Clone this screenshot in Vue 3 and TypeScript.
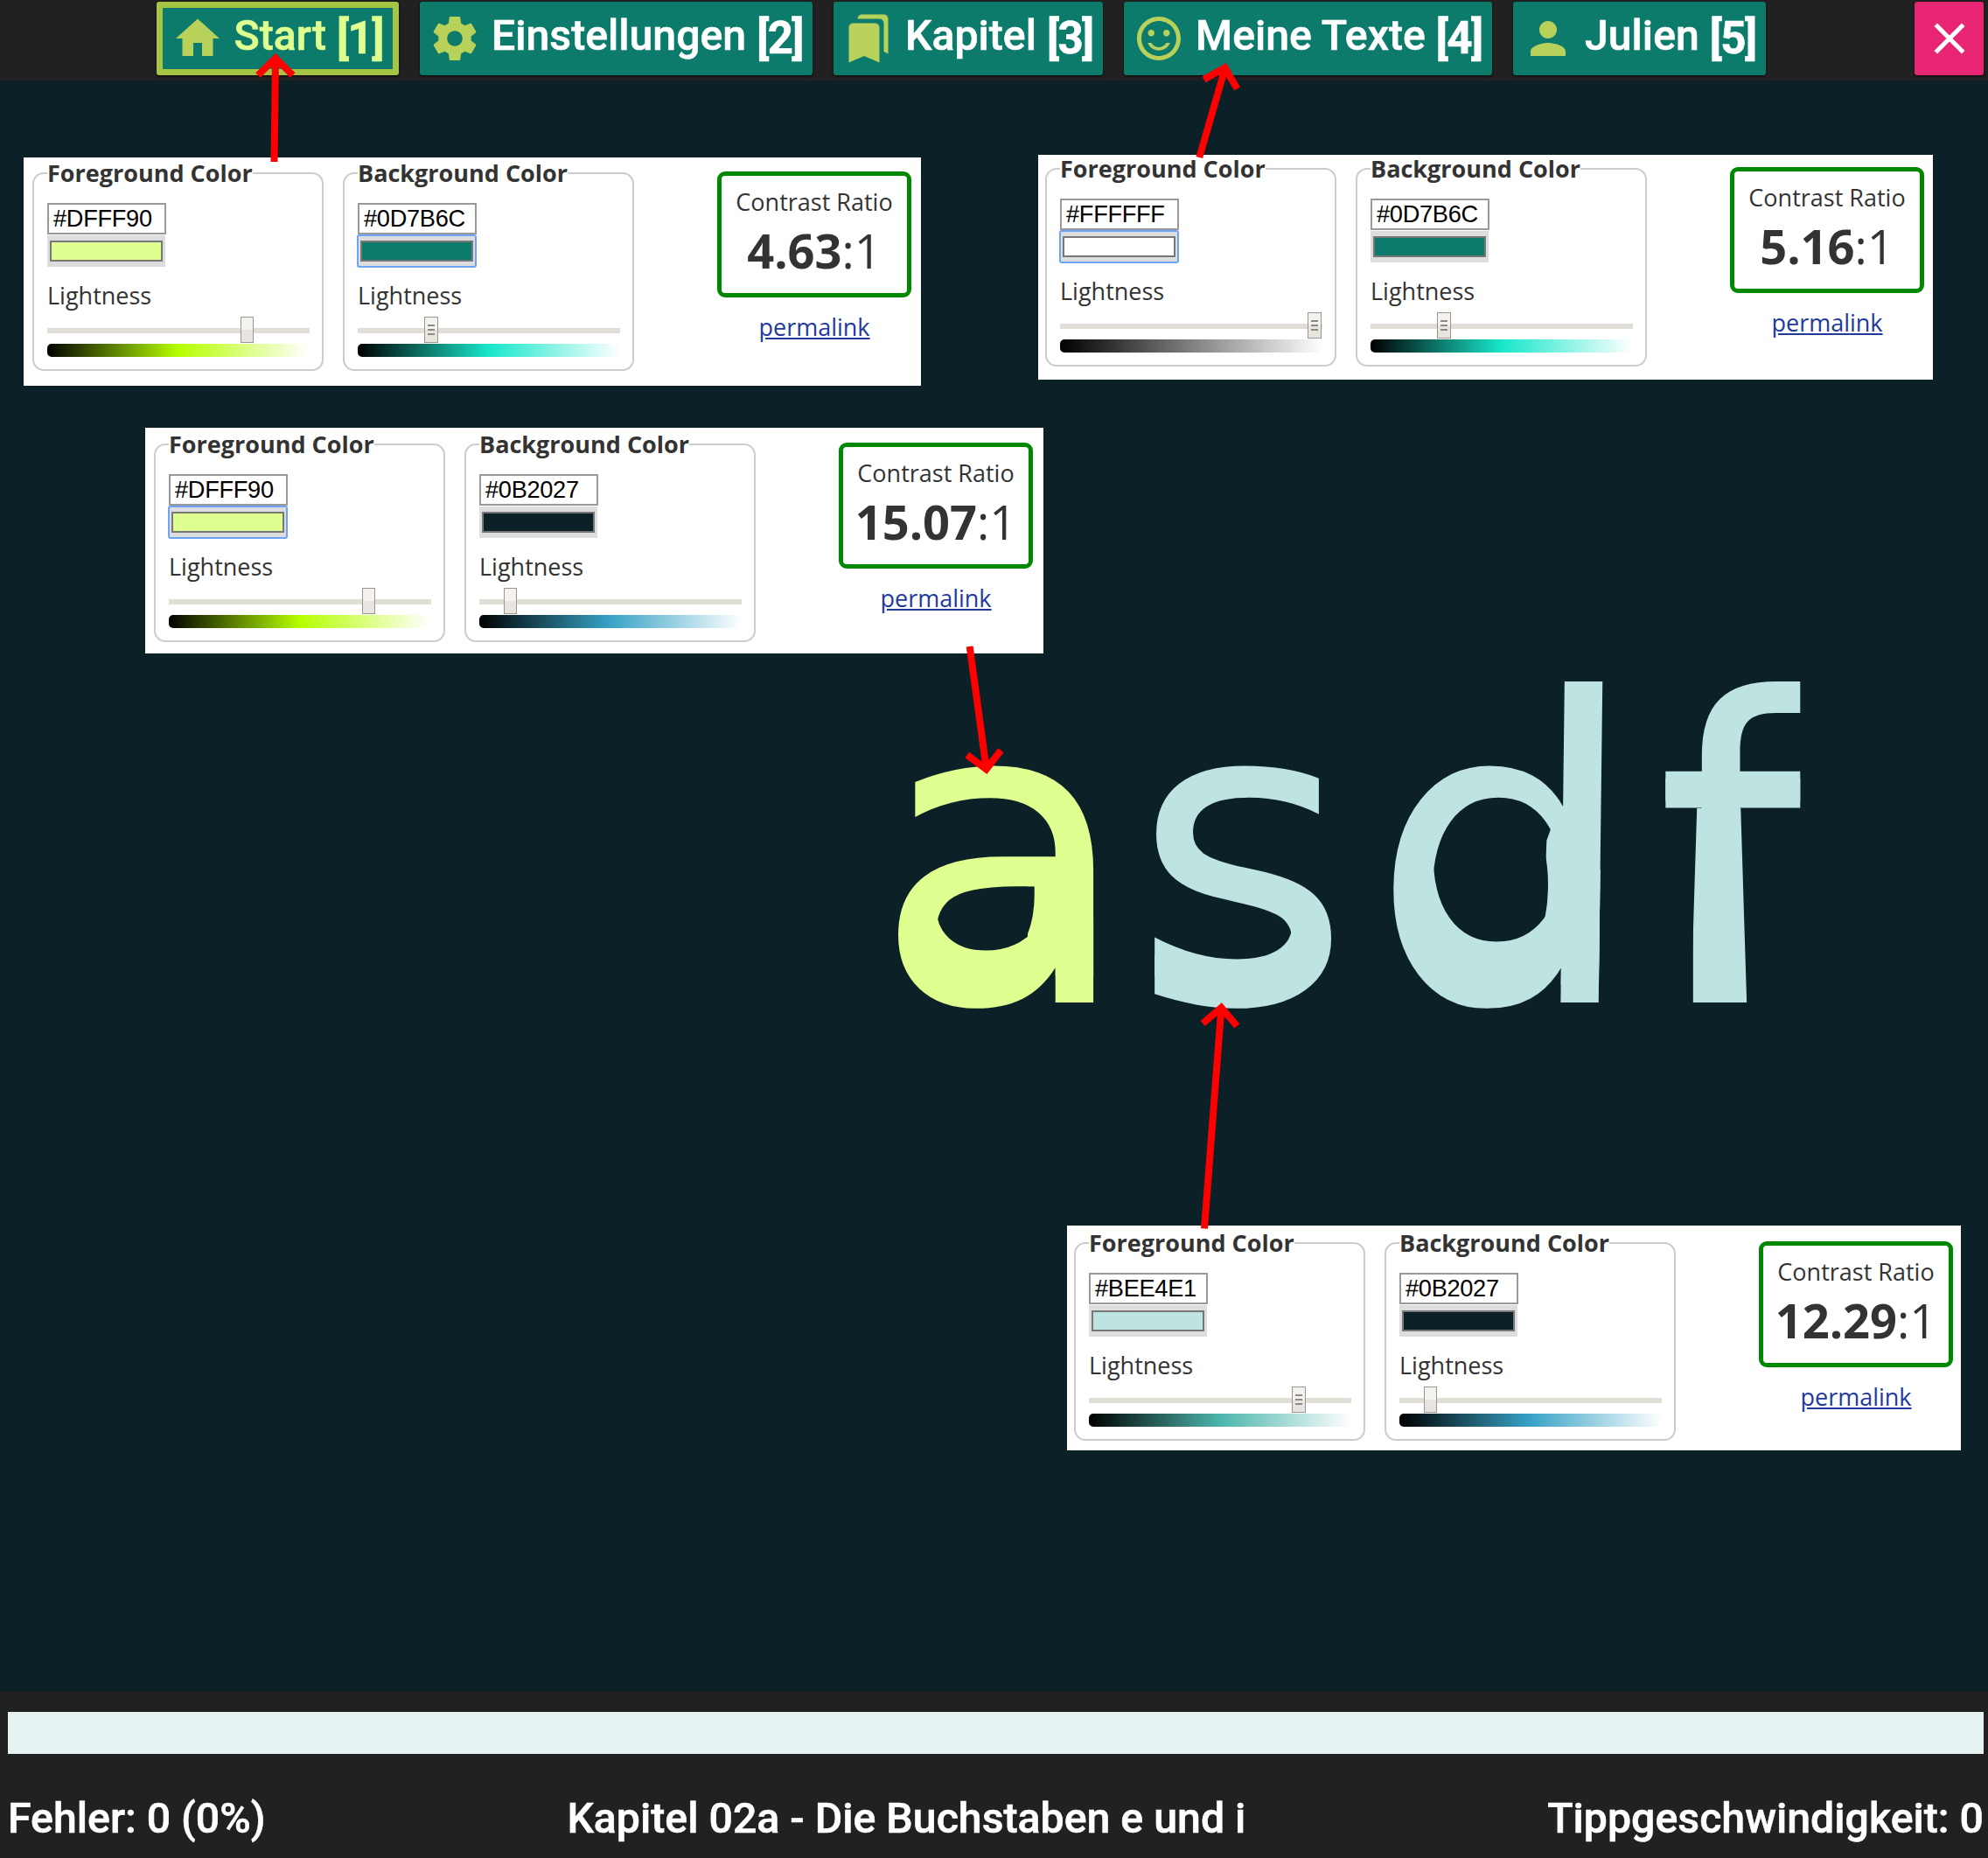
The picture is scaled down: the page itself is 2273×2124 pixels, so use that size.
<script setup lang="ts">
interface NavItem {
  label: string
  key: string
  icon: string
  width: number
  active?: boolean
}

interface Picker {
  title: string
  hex: string
  mid: string
  thumb: number
  grip?: boolean
  focused?: boolean
}

interface Card {
  x: number
  y: number
  w: number
  h: number
  padX: number
  padY: number
  ratio: string
  pickers: Picker[]
}

const icons: Record<string, string> = {
  home: 'M10 20v-6h4v6h5v-8h3L12 3 2 12h3v8z',
  settings:
    'M19.43 12.98c.04-.32.07-.64.07-.98s-.03-.66-.07-.98l2.11-1.65c.19-.15.24-.42.12-.64l-2-3.46c-.12-.22-.39-.3-.61-.22l-2.49 1c-.52-.4-1.08-.73-1.69-.98l-.38-2.65C14.46 2.18 14.25 2 14 2h-4c-.25 0-.46.18-.49.42l-.38 2.65c-.61.25-1.17.59-1.69.98l-2.49-1c-.23-.09-.49 0-.61.22l-2 3.46c-.13.22-.07.49.12.64l2.11 1.65c-.04.32-.07.65-.07.98s.03.66.07.98l-2.11 1.65c-.19.15-.24.42-.12.64l2 3.46c.12.22.39.3.61.22l2.49-1c.52.4 1.08.73 1.69.98l.38 2.65c.03.24.24.42.49.42h4c.25 0 .46-.18.49-.42l.38-2.65c.61-.25 1.17-.59 1.69-.98l2.49 1c.23.09.49 0 .61-.22l2-3.46c.12-.22.07-.49-.12-.64l-2.11-1.65zM12 15.5c-1.93 0-3.5-1.57-3.5-3.5s1.57-3.5 3.5-3.5 3.5 1.57 3.5 3.5-1.57 3.5-3.5 3.5z',
  bookmarks:
    'M19 18l2 1V3c0-1.1-.9-2-2-2H8.99C7.89 1 7 1.9 7 3h10c1.1 0 2 .9 2 2v13zM15 5H5c-1.1 0-2 .9-2 2v16l7-3 7 3V7c0-1.1-.9-2-2-2z',
  smile:
    'M11.99 2C6.47 2 2 6.48 2 12s4.47 10 9.99 10C17.52 22 22 17.52 22 12S17.52 2 11.99 2zM12 20c-4.42 0-8-3.58-8-8s3.58-8 8-8 8 3.58 8 8-3.58 8-8 8zm3.5-9c.83 0 1.5-.67 1.5-1.5S16.33 8 15.5 8 14 8.67 14 9.5s.67 1.5 1.5 1.5zm-7 0c.83 0 1.5-.67 1.5-1.5S9.33 8 8.5 8 7 8.67 7 9.5 7.67 11 8.5 11zm3.5 6.5c2.33 0 4.31-1.46 5.11-3.5h-1.67c-.69 1.19-1.97 2-3.44 2s-2.75-.81-3.44-2H6.89c.8 2.04 2.78 3.5 5.11 3.5z',
  person:
    'M12 12c2.21 0 4-1.79 4-4s-1.79-4-4-4-4 1.79-4 4 1.79 4 4 4zm0 2c-2.67 0-8 1.34-8 4v2h16v-2c0-2.66-5.33-4-8-4z',
  close:
    'M19 6.41L17.59 5 12 10.59 6.41 5 5 6.41 10.59 12 5 17.59 6.41 19 12 13.41 17.59 19 19 17.59 13.41 12z',
}

const nav: NavItem[] = [
  { label: 'Start', key: '[1]', icon: 'home', width: 277, active: true },
  { label: 'Einstellungen', key: '[2]', icon: 'settings', width: 449 },
  { label: 'Kapitel', key: '[3]', icon: 'bookmarks', width: 308 },
  { label: 'Meine Texte', key: '[4]', icon: 'smile', width: 421 },
  { label: 'Julien', key: '[5]', icon: 'person', width: 289 },
]

const FG = 'Foreground Color'
const BG = 'Background Color'

const cards: Card[] = [
  {
    x: 27, y: 180, w: 1026, h: 261, padX: 10, padY: 2, ratio: '4.63',
    pickers: [
      { title: FG, hex: '#DFFF90', mid: '#b6ff00', thumb: 221 },
      { title: BG, hex: '#0D7B6C', mid: '#18e7cb', thumb: 76, grip: true, focused: true },
    ],
  },
  {
    x: 1187, y: 177, w: 1023, h: 257, padX: 8, padY: 0, ratio: '5.16',
    pickers: [
      { title: FG, hex: '#FFFFFF', mid: '#808080', thumb: 283, grip: true, focused: true },
      { title: BG, hex: '#0D7B6C', mid: '#18e7cb', thumb: 76, grip: true },
    ],
  },
  {
    x: 166, y: 489, w: 1027, h: 258, padX: 10, padY: 3, ratio: '15.07',
    pickers: [
      { title: FG, hex: '#DFFF90', mid: '#b6ff00', thumb: 221, focused: true },
      { title: BG, hex: '#0B2027', mid: '#38a3c7', thumb: 28 },
    ],
  },
  {
    x: 1220, y: 1401, w: 1022, h: 257, padX: 8, padY: 4, ratio: '12.29',
    pickers: [
      { title: FG, hex: '#BEE4E1', mid: '#4cb6ac', thumb: 232, grip: true },
      { title: BG, hex: '#0B2027', mid: '#38a3c7', thumb: 28 },
    ],
  },
]

const arrows = [
  { shaft: 'M313.5 185L315 68', head: 'M295 86L315 66.5L334.7 86' },
  { shaft: 'M1371.3 180L1400.4 79', head: 'M1376.5 90.7L1400.5 77.5L1414.6 101.5' },
  { shaft: 'M1108.7 739L1127.6 878', head: 'M1105.8 863L1127.7 879.5L1144.4 857.7' },
  { shaft: 'M1377 1404.5L1396.3 1153', head: 'M1375.2 1170L1396.4 1152L1414.4 1173' },
]

const letters = ['a', 's', 'd', 'f']
</script>

<template>
  <div class="app">
    <header class="topbar">
      <button
        v-for="n in nav"
        :key="n.icon"
        class="tab"
        :class="{ active: n.active }"
        :style="{ width: n.width + 'px' }"
      >
        <svg class="icon" viewBox="0 0 24 24"><path :d="icons[n.icon]" /></svg>
        <span class="label">{{ n.label }}</span>
        <span class="key">{{ n.key }}</span>
      </button>
      <button class="tab close" aria-label="Schließen">
        <svg class="icon" viewBox="0 0 24 24"><path :d="icons.close" /></svg>
      </button>
    </header>

    <main class="typing">
      <span v-for="l in letters" :key="l" class="letter" :class="'l-' + l" :data-letter="l">{{ l }}</span>
    </main>

    <footer class="bottom">
      <div class="progress"></div>
      <div class="stats">
        <span>Fehler: 0 (0%)</span>
        <span>Kapitel 02a - Die Buchstaben e und i</span>
        <span>Tippgeschwindigkeit: 0</span>
      </div>
    </footer>

    <section
      v-for="(c, i) in cards"
      :key="i"
      class="card"
      :style="{
        left: c.x + 'px',
        top: c.y + 'px',
        width: c.w + 'px',
        height: c.h + 'px',
        padding: c.padY + 'px 0 0 ' + c.padX + 'px',
      }"
    >
      <fieldset v-for="p in c.pickers" :key="p.title" class="picker">
        <legend>{{ p.title }}</legend>
        <div class="hex">{{ p.hex }}</div>
        <div class="swatch" :class="{ focused: p.focused }">
          <div class="fill" :style="{ background: p.hex }"></div>
        </div>
        <div class="lightness">Lightness</div>
        <div class="slider">
          <div class="track"></div>
          <div class="thumb" :class="{ grip: p.grip }" :style="{ left: p.thumb + 'px' }">
            <template v-if="p.grip"><i></i><i></i><i></i></template>
          </div>
        </div>
        <div
          class="ramp"
          :style="{ background: `linear-gradient(to right, #000, ${p.mid}, #fff)` }"
        ></div>
      </fieldset>
      <div class="result">
        <div class="ratio-box">
          <div class="caption">Contrast Ratio</div>
          <div class="ratio"><b>{{ c.ratio }}</b>:1</div>
        </div>
        <a class="permalink">permalink</a>
      </div>
    </section>

    <svg class="arrows" viewBox="0 0 2273 2124">
      <g v-for="(a, i) in arrows" :key="i">
        <path :d="a.shaft" />
        <path :d="a.head" />
      </g>
    </svg>
  </div>
</template>

<style>
body {
  margin: 0;
  background: #0b2027;
}
</style>

<style scoped>
.app {
  position: relative;
  display: flex;
  flex-direction: column;
  width: 2273px;
  height: 2124px;
  overflow: hidden;
  background: #0b2027;
  font-family: Roboto, sans-serif;
  color: #fff;
}

.topbar {
  display: flex;
  align-items: flex-start;
  gap: 24px;
  height: 92px;
  box-sizing: border-box;
  padding: 2px 5px 0 179px;
  background: #212121;
}

.tab {
  flex: none;
  display: flex;
  align-items: flex-start;
  box-sizing: border-box;
  height: 84px;
  margin: 0;
  padding: 12px 0 0 10px;
  border: 0;
  border-radius: 3px;
  background: #0d7b6c;
  color: #fff;
  box-shadow: 0 1px 3px rgba(0, 0, 0, 0.8);
  font: 500 48.2px/56px Roboto, sans-serif;
  -webkit-text-stroke: 0.6px currentColor;
  white-space: nowrap;
}

.tab.active {
  padding: 5px 0 0 9.5px;
  border: 7px solid #a6c545;
  color: #dfff90;
}

.icon {
  flex: none;
  display: block;
  width: 60px;
  height: 60px;
  fill: #b7d15b;
}

.label {
  margin-left: 12px;
  margin-top: -1px;
}

.key {
  margin-left: 12px;
  margin-top: 2px;
  font-size: 51px;
  font-weight: 700;
  letter-spacing: -1.6px;
}

.tab.close {
  width: 79px;
  margin-left: auto;
  background: #e82573;
}

.close .icon {
  fill: #fff;
}

.typing {
  flex: 1;
  display: flex;
  align-items: flex-start;
  padding: 607px 0 0 998px;
  font: 400 483px/560px "DejaVu Sans", sans-serif;
  color: #bee4e1;
}

.letter {
  position: relative;
  display: block;
}

/* The typing face is bottom-heavy: clipped copies of each glyph add the weight. */
.letter::before,
.letter::after {
  content: attr(data-letter);
  position: absolute;
  left: 0;
  top: 0;
}

.l-a {
  color: #dfff90;
}

.l-a::before {
  left: -24px;
  clip-path: inset(301px 0 169px 201px);
}

.l-a::after {
  top: -30px;
  clip-path: inset(381px 0 0 45px);
}

.l-s::before {
  display: none;
}

.l-s::after {
  top: -20px;
  clip-path: inset(378px 36px 0 0);
}

.l-d {
  margin-left: 19px;
  transform: skewX(-0.7deg);
  transform-origin: 0 450px;
}

.l-d::before {
  left: -16px;
  clip-path: polygon(226px 236px, 217px 262px, 216px 306px, 216px 340px, 212px 360px, 206px 373px, 240px 373px, 240px 236px);
}

.l-d::after {
  top: -20px;
  text-shadow: 0 -20px;
  clip-path: inset(315px 0 0 45px);
}

.l-f {
  margin-left: 22px;
  clip-path: inset(-100px 5px -50px -50px);
}

.l-f::before {
  top: 8px;
  clip-path: inset(177px 0 342px 0);
}

.l-f::after {
  text-shadow: -10px 0, 8px 0;
  clip-path: polygon(47px 225px, 97px 225px, 104px 450px, 40px 450px);
}

.bottom {
  height: 191px;
  box-sizing: border-box;
  padding: 24px 5px 0 9px;
  background: #212121;
}

.progress {
  height: 48px;
  background: #e4f3f1;
}

.stats {
  display: flex;
  justify-content: space-between;
  margin-top: 46px;
  font: 500 48.25px/56px Roboto, sans-serif;
  -webkit-text-stroke: 0.6px currentColor;
  white-space: nowrap;
}

.card {
  position: absolute;
  display: flex;
  align-items: flex-start;
  box-sizing: border-box;
  background: #fff;
  color: #333;
  font: 400 27px/34px "Open Sans", sans-serif;
}

.picker {
  flex: none;
  box-sizing: border-box;
  width: 333px;
  height: 242px;
  margin: 0 22px 0 0;
  padding: 0 14px 0 15px;
  border: 2px solid #ccc;
  border-radius: 13px;
}

.picker legend {
  padding: 0;
  font-weight: 700;
  line-height: 32px;
  white-space: nowrap;
}

.hex {
  box-sizing: border-box;
  width: 136px;
  height: 36px;
  margin-top: 18px;
  padding-left: 5px;
  border: 2px solid #999;
  color: #000;
  font: 27.2px/32px "Liberation Sans", Arial, sans-serif;
  letter-spacing: -0.3px;
}

.swatch {
  box-sizing: border-box;
  width: 135px;
  height: 36px;
  margin-top: 1px;
  padding: 6px 3px;
  background: #ddd;
}

.swatch.focused {
  outline: 2px solid #6ea4f7;
  outline-offset: -1px;
  border-radius: 2px;
}

.fill {
  box-sizing: border-box;
  height: 24px;
  border: 2px solid #777;
}

.lightness {
  margin-top: 18px;
  line-height: 30px;
}

.slider {
  position: relative;
  height: 30px;
  margin-top: 9px;
  padding-top: 13px;
  box-sizing: border-box;
}

.track {
  width: 300px;
  height: 6px;
  background: #e1ddd7;
}

.thumb {
  position: absolute;
  top: 0;
  display: flex;
  flex-direction: column;
  align-items: center;
  justify-content: center;
  gap: 3px;
  box-sizing: border-box;
  width: 15px;
  height: 30px;
  border: 1.5px solid #9d968c;
  background: linear-gradient(#f4f2ef 50%, #e8e4df 50%);
}

.thumb.grip {
  width: 16px;
}

.thumb i {
  width: 8px;
  height: 2px;
  background: #8f8981;
}

.ramp {
  width: 300px;
  height: 15px;
  margin-top: 1px;
  border-radius: 5px;
}

.result {
  flex: none;
  display: flex;
  flex-direction: column;
  align-items: center;
  width: 222px;
  margin: 14px 0 0 73px;
}

.ratio-box {
  box-sizing: border-box;
  width: 222px;
  height: 144px;
  padding-top: 13px;
  border: 5px solid #080;
  border-radius: 9px;
  text-align: center;
  white-space: nowrap;
}

.ratio {
  margin-top: 8px;
  font-size: 54.2px;
  line-height: 60px;
}

.permalink {
  margin-top: 17px;
  color: #1f3a9c;
  text-decoration: underline;
}

.arrows {
  position: absolute;
  left: 0;
  top: 0;
  width: 2273px;
  height: 2124px;
  fill: none;
  stroke: #f00;
  stroke-width: 8;
  pointer-events: none;
}
</style>
